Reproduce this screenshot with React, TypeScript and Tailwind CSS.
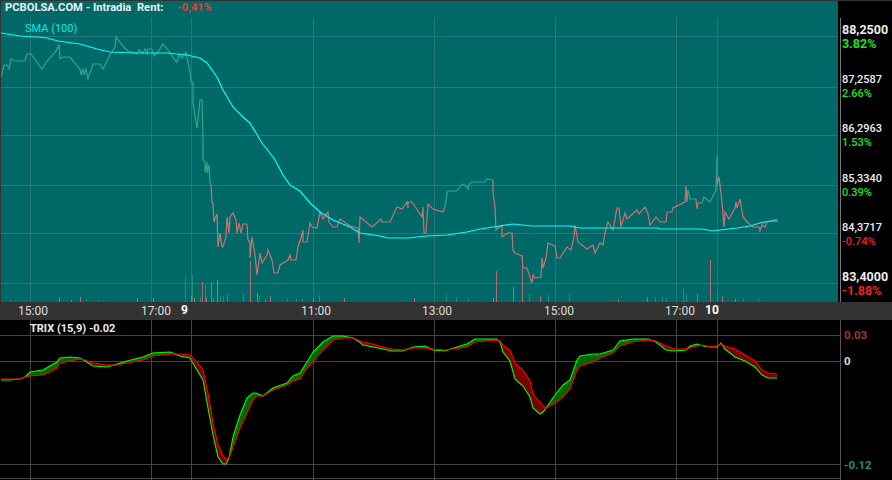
const VGRID = [30, 151, 191, 313, 434, 555, 676, 717];
const PRICE_GRID = [36, 87, 135, 185, 233, 283];
const TRIX_GRID = [335, 361, 464, 478];

const UP = "#2ba88c";
const DOWN = "#c97272";

// price line, split by colour
const PRICE: [string, string][] = [
  [UP, "1,77 2,74 4,65 7,65 9,69 11,59 15,61 25,61 27,54 31,54 42,69 48,60 57,50 59,44 60,59 63,57 70,57 80,69 81,75 83,69 84,75 86,69 88,79 93,64 100,64 103,69 110,55 115,47 116,37 122,45 128,51 133,52 137,54 139,50 143,53 145,49 147,54 148,49 152,49 154,56 158,52 163,44 168,50 175,60 177,62 179,55 182,58 186,52 187,58 190,72 191,82 193,82 193,103 197,128 200,100 202,100 203,140 203,160 205,162 205,172 207,162 207,173 209,165 210,182 211,185"],
  [DOWN, "211,185 212,203 213,203 214,222 217,214 218,247 220,233 222,247 223,247 226,237 227,217 229,233 230,217 233,213 236,220 237,233 239,223 241,233 243,224 247,224 248,240 250,242 250,258 252,237 255,255 257,275 260,253 262,263 267,255 268,250 272,260 274,273 278,273 280,265 288,260 290,255 291,260 296,260 298,247 300,240 300,242 303,230 303,242 307,242 310,223 312,227 317,228 320,212 323,219 328,212 329,222 333,227 337,227 340,219 350,226 358,228 359,243 360,217 372,227 381,219 382,222 390,222 397,207 402,209 407,202 408,208 408,202 412,202 422,217 423,207 424,233 426,233 428,204 433,209 443,212 445,207"],
  [UP, "445,207 447,193 448,191 457,191 462,184 466,186 468,189 469,184 472,182 485,182 487,179 493,180"],
  [DOWN, "493,180 493,193 495,207 496,230 502,225 502,237 508,233 512,233 513,250 515,253 522,256 523,268 527,268 532,283 533,275 535,278 541,277 542,258 543,268 546,258 548,243 555,246 557,258 560,258 567,247 571,250 574,237 575,225 578,242 587,249 593,245 595,253 600,243 603,245 605,233 608,222 613,230 617,208 619,208 621,227 625,213 627,219 637,210 639,214 645,207 648,214 650,225 656,217 660,222 666,222 667,212 672,212 673,208 685,202 686,186 687,202"],
  [UP, "687,202 688,190 690,199 696,199"],
  [DOWN, "696,199 697,209 698,203 702,203"],
  [UP, "702,203 704,197 710,202 716,190 717,156 717,185"],
  [DOWN, "717,185 719,177 722,202 724,227 725,212 729,219 735,208 736,202 737,208 740,199 743,217 748,223 753,227 759,227 760,231 762,225 765,227 767,222 772,221 777,219"],
];

const SMA =
  "1,33 20,36 37,37 47,38 58,41 80,44 97,49 110,52 133,53 167,53 187,55 200,58 207,63 217,77 223,90 233,107 243,117 250,123 262,143 273,157 275,160 283,175 290,185 300,191 310,203 320,212 333,220 350,227 360,233 380,236 388,238 408,238 427,236 447,235 467,232 480,229 500,226 513,224 532,226 570,226 580,228 658,228 660,229 702,229 713,231 720,230 737,228 750,226 760,223 770,221 778,221";

// x, top, up?
const VOLUME: [number, number, boolean][] = [
  [10, 300, true], [59, 297, false], [71, 300, false], [80, 297, false], [86, 299, true], [98, 300, true], [137, 298, false], [153, 298, false],
  [185, 275, true], [191, 296, false], [192, 275, true], [194, 298, false], [200, 297, true], [202, 282, false], [205, 284, true], [206, 297, false],
  [211, 282, false], [213, 298, false], [217, 280, false], [220, 296, true], [223, 296, true], [227, 294, true], [243, 294, true], [250, 261, false],
  [257, 293, false], [259, 296, true], [265, 299, true], [270, 296, false], [287, 299, true], [296, 299, true], [302, 299, true], [313, 298, false],
  [319, 295, true], [344, 298, false], [414, 298, false], [446, 295, true], [456, 297, true], [468, 299, true], [493, 298, false], [496, 271, false],
  [513, 287, false], [522, 256, false], [529, 294, true], [540, 296, false], [548, 295, true], [569, 294, true], [618, 299, false], [647, 297, false],
  [655, 297, true], [662, 297, true], [666, 298, true], [683, 288, true], [686, 294, true], [697, 294, false], [710, 260, false], [717, 292, true],
  [722, 296, false], [735, 299, false], [743, 299, true], [758, 299, true],
];

// x, trix (green), signal (red)
const TRIX: [number, number, number][] = [
  [1, 380, 379], [10, 380, 379], [20, 379, 379], [25, 377, 377], [30, 372, 376], [43, 370, 375], [50, 366, 372], [57, 362, 368], [60, 358, 363], [70, 357, 361],
  [80, 358, 359], [85, 361, 360], [93, 366, 363], [107, 367, 365], [117, 364, 365], [127, 361, 363], [143, 357, 360], [153, 353, 356], [170, 352, 354], [180, 356, 354],
  [190, 358, 355], [197, 370, 362], [203, 380, 370], [208, 408, 393], [213, 435, 423], [218, 457, 445], [223, 464, 456], [226, 464, 459], [229, 458, 458], [233, 437, 447],
  [240, 415, 428], [247, 398, 413], [253, 393, 400], [256, 393, 396], [263, 396, 396], [273, 388, 390], [287, 383, 385], [293, 376, 381], [300, 373, 379], [307, 362, 368],
  [313, 352, 362], [323, 342, 350], [333, 336, 340], [343, 336, 338], [353, 338, 338], [358, 341, 340], [363, 345, 342], [373, 347, 344], [383, 349, 347], [392, 351, 349],
  [403, 351, 350], [413, 347, 348], [425, 346, 348], [433, 350, 349], [445, 351, 350], [460, 346, 348], [467, 344, 347], [475, 339, 342], [497, 339, 340], [500, 342, 341],
  [503, 352, 345], [510, 361, 350], [515, 379, 363], [523, 386, 370], [530, 397, 381], [533, 408, 394], [540, 414, 402], [543, 412, 406], [546, 408, 408], [555, 395, 403],
  [563, 385, 397], [570, 380, 389], [577, 360, 370], [580, 356, 366], [593, 354, 362], [600, 354, 358], [613, 350, 353], [620, 341, 346], [633, 339, 342], [648, 339, 340],
  [656, 342, 341], [666, 350, 346], [675, 351, 349], [686, 350, 349], [690, 346, 348], [697, 344, 346], [703, 346, 345], [710, 347, 347], [717, 347, 346], [721, 343, 344],
  [725, 349, 346], [735, 357, 349], [745, 361, 355], [755, 367, 361], [762, 375, 370], [768, 378, 373], [777, 378, 374],
];

function TrixBands() {
  const bands = [];
  for (let i = 0; i < TRIX.length - 1; i++) {
    const [x0, g0, r0] = TRIX[i];
    const [x1, g1, r1] = TRIX[i + 1];
    const d0 = g0 - r0;
    const d1 = g1 - r1;
    if (d0 * d1 < 0) {
      const t = d0 / (d0 - d1);
      const xc = x0 + (x1 - x0) * t;
      const yc = g0 + (g1 - g0) * t;
      bands.push(<polygon key={`${i}a`} points={`${x0},${g0} ${xc},${yc} ${x0},${r0}`} fill={d0 < 0 ? "#006400" : "#760000"} />);
      bands.push(<polygon key={`${i}b`} points={`${xc},${yc} ${x1},${g1} ${x1},${r1}`} fill={d1 < 0 ? "#006400" : "#760000"} />);
    } else {
      bands.push(
        <polygon key={i} points={`${x0},${g0} ${x1},${g1} ${x1},${r1} ${x0},${r0}`} fill={d0 + d1 < 0 ? "#006400" : "#760000"} />
      );
    }
  }
  return <>{bands}</>;
}

function PriceChart() {
  return (
    <svg viewBox="1 1 837 301" className="absolute inset-0 h-full w-full">
      {PRICE_GRID.map((y) => (
        <line key={y} x1="1" x2="838" y1={y + 0.5} y2={y + 0.5} stroke="#2a7875" />
      ))}
      {VGRID.map((x) => (
        <line key={x} x1={x + 0.5} x2={x + 0.5} y1="18" y2="302" stroke="#2a7875" />
      ))}
      {VOLUME.map(([x, top, up], i) => (
        <line key={i} x1={x + 0.5} x2={x + 0.5} y1={top} y2="302" stroke={up ? "#1f8f78" : "#b86a6a"} />
      ))}
      {PRICE.map(([color, pts], i) => (
        <polyline key={i} points={pts} fill="none" stroke={color} strokeWidth="1.2" />
      ))}
      <polyline points={SMA} fill="none" stroke="#0ff" strokeWidth="1.2" />
    </svg>
  );
}

function TrixChart() {
  return (
    <svg viewBox="0 320 840 160" className="absolute inset-0 h-full w-full">
      {TRIX_GRID.map((y) => (
        <line key={y} x1="0" x2="840" y1={y + 0.5} y2={y + 0.5} stroke="#444" />
      ))}
      {VGRID.map((x) => (
        <line key={x} x1={x + 0.5} x2={x + 0.5} y1="320" y2="480" stroke="#444" />
      ))}
      <TrixBands />
      <polyline points={TRIX.map(([x, g]) => `${x},${g}`).join(" ")} fill="none" stroke="#0f0" strokeWidth="1.1" />
      <polyline points={TRIX.map(([x, , r]) => `${x},${r}`).join(" ")} fill="none" stroke="#f00" strokeWidth="1.1" />
    </svg>
  );
}

function AxisLabel({ price, pct, up, big, className }: { price: string; pct: string; up?: boolean; big?: boolean; className: string }) {
  return (
    <div className={`${className} ${big ? "text-[12.5px] font-bold" : "text-[11px] font-medium"}`}>
      <div className="h-[14px] leading-[14px] text-[#eee]">{price}</div>
      <div className={`h-[14px] leading-[14px] ${up ? "text-[#22e022]" : "text-[#ee2222]"}`}>{pct}</div>
    </div>
  );
}

export default function App() {
  return (
    <div className="flex h-[480px] w-[892px] flex-col overflow-hidden bg-black font-['Roboto',sans-serif]">
      <div className="flex h-[302px]">
        <div className="relative w-[838px] border-t border-l border-[#333] bg-[#006968]">
          <PriceChart />
          <div className="relative flex h-[14px] items-center pl-[4px] text-[11.2px] leading-none font-bold whitespace-pre text-[#eee]">
            <span>PCBOLSA.COM - Intradia  Rent:</span>
            <span className="ml-[14px] text-[#e53935]">-0,41%</span>
          </div>
          <div className="relative mt-[7px] pl-[24px] text-[11px] leading-[14px] text-[#11e5e5]">SMA (100)</div>
        </div>
        <div className="w-[54px] border-t border-[#333] pl-[2px]">
          <div className="mt-[17px] flex h-[284px] flex-col border-l border-[#777] pl-[1px]">
            <AxisLabel className="mt-[5px]" price="88,2500" pct="3.82%" up big />
            <AxisLabel className="mt-[22px]" price="87,2587" pct="2.66%" up />
            <AxisLabel className="mt-[21px]" price="86,2963" pct="1.53%" up />
            <AxisLabel className="mt-[22px]" price="85,3340" pct="0.39%" up />
            <AxisLabel className="mt-[21px]" price="84,3717" pct="-0.74%" />
            <AxisLabel className="mt-[21px]" price="83,4000" pct="-1.88%" big />
          </div>
        </div>
      </div>

      <div className="flex h-[18px] items-center bg-[#333] text-[12px] leading-none whitespace-nowrap text-[#ddd]">
        <span className="ml-[18px] w-[27px]">15:00</span>
        <span className="ml-[96px] w-[27px]">17:00</span>
        <span className="mb-[3px] ml-[13px] w-[8px] font-bold text-white">9</span>
        <span className="ml-[112px] w-[27px]">11:00</span>
        <span className="ml-[94px] w-[27px]">13:00</span>
        <span className="ml-[95px] w-[27px]">15:00</span>
        <span className="ml-[94px] w-[27px]">17:00</span>
        <span className="mb-[3px] ml-[13px] w-[14px] font-bold text-white">10</span>
      </div>

      <div className="flex h-[160px]">
        <div className="relative w-[840px]">
          <TrixChart />
          <div className="relative pt-[2px] pl-[30px] text-[11px] leading-[14px] font-bold text-[#eee]">TRIX (15,9) -0.02</div>
        </div>
        <div className="flex-1 border-l border-[#555] pl-[3px] text-[11.5px] leading-[14px] font-bold">
          <div className="mt-[8px] text-[#a83232]">0.03</div>
          <div className="mt-[12px] text-[#ddd]">0</div>
          <div className="mt-[90px] text-[#1f8f70]">-0.12</div>
        </div>
      </div>
    </div>
  );
}
